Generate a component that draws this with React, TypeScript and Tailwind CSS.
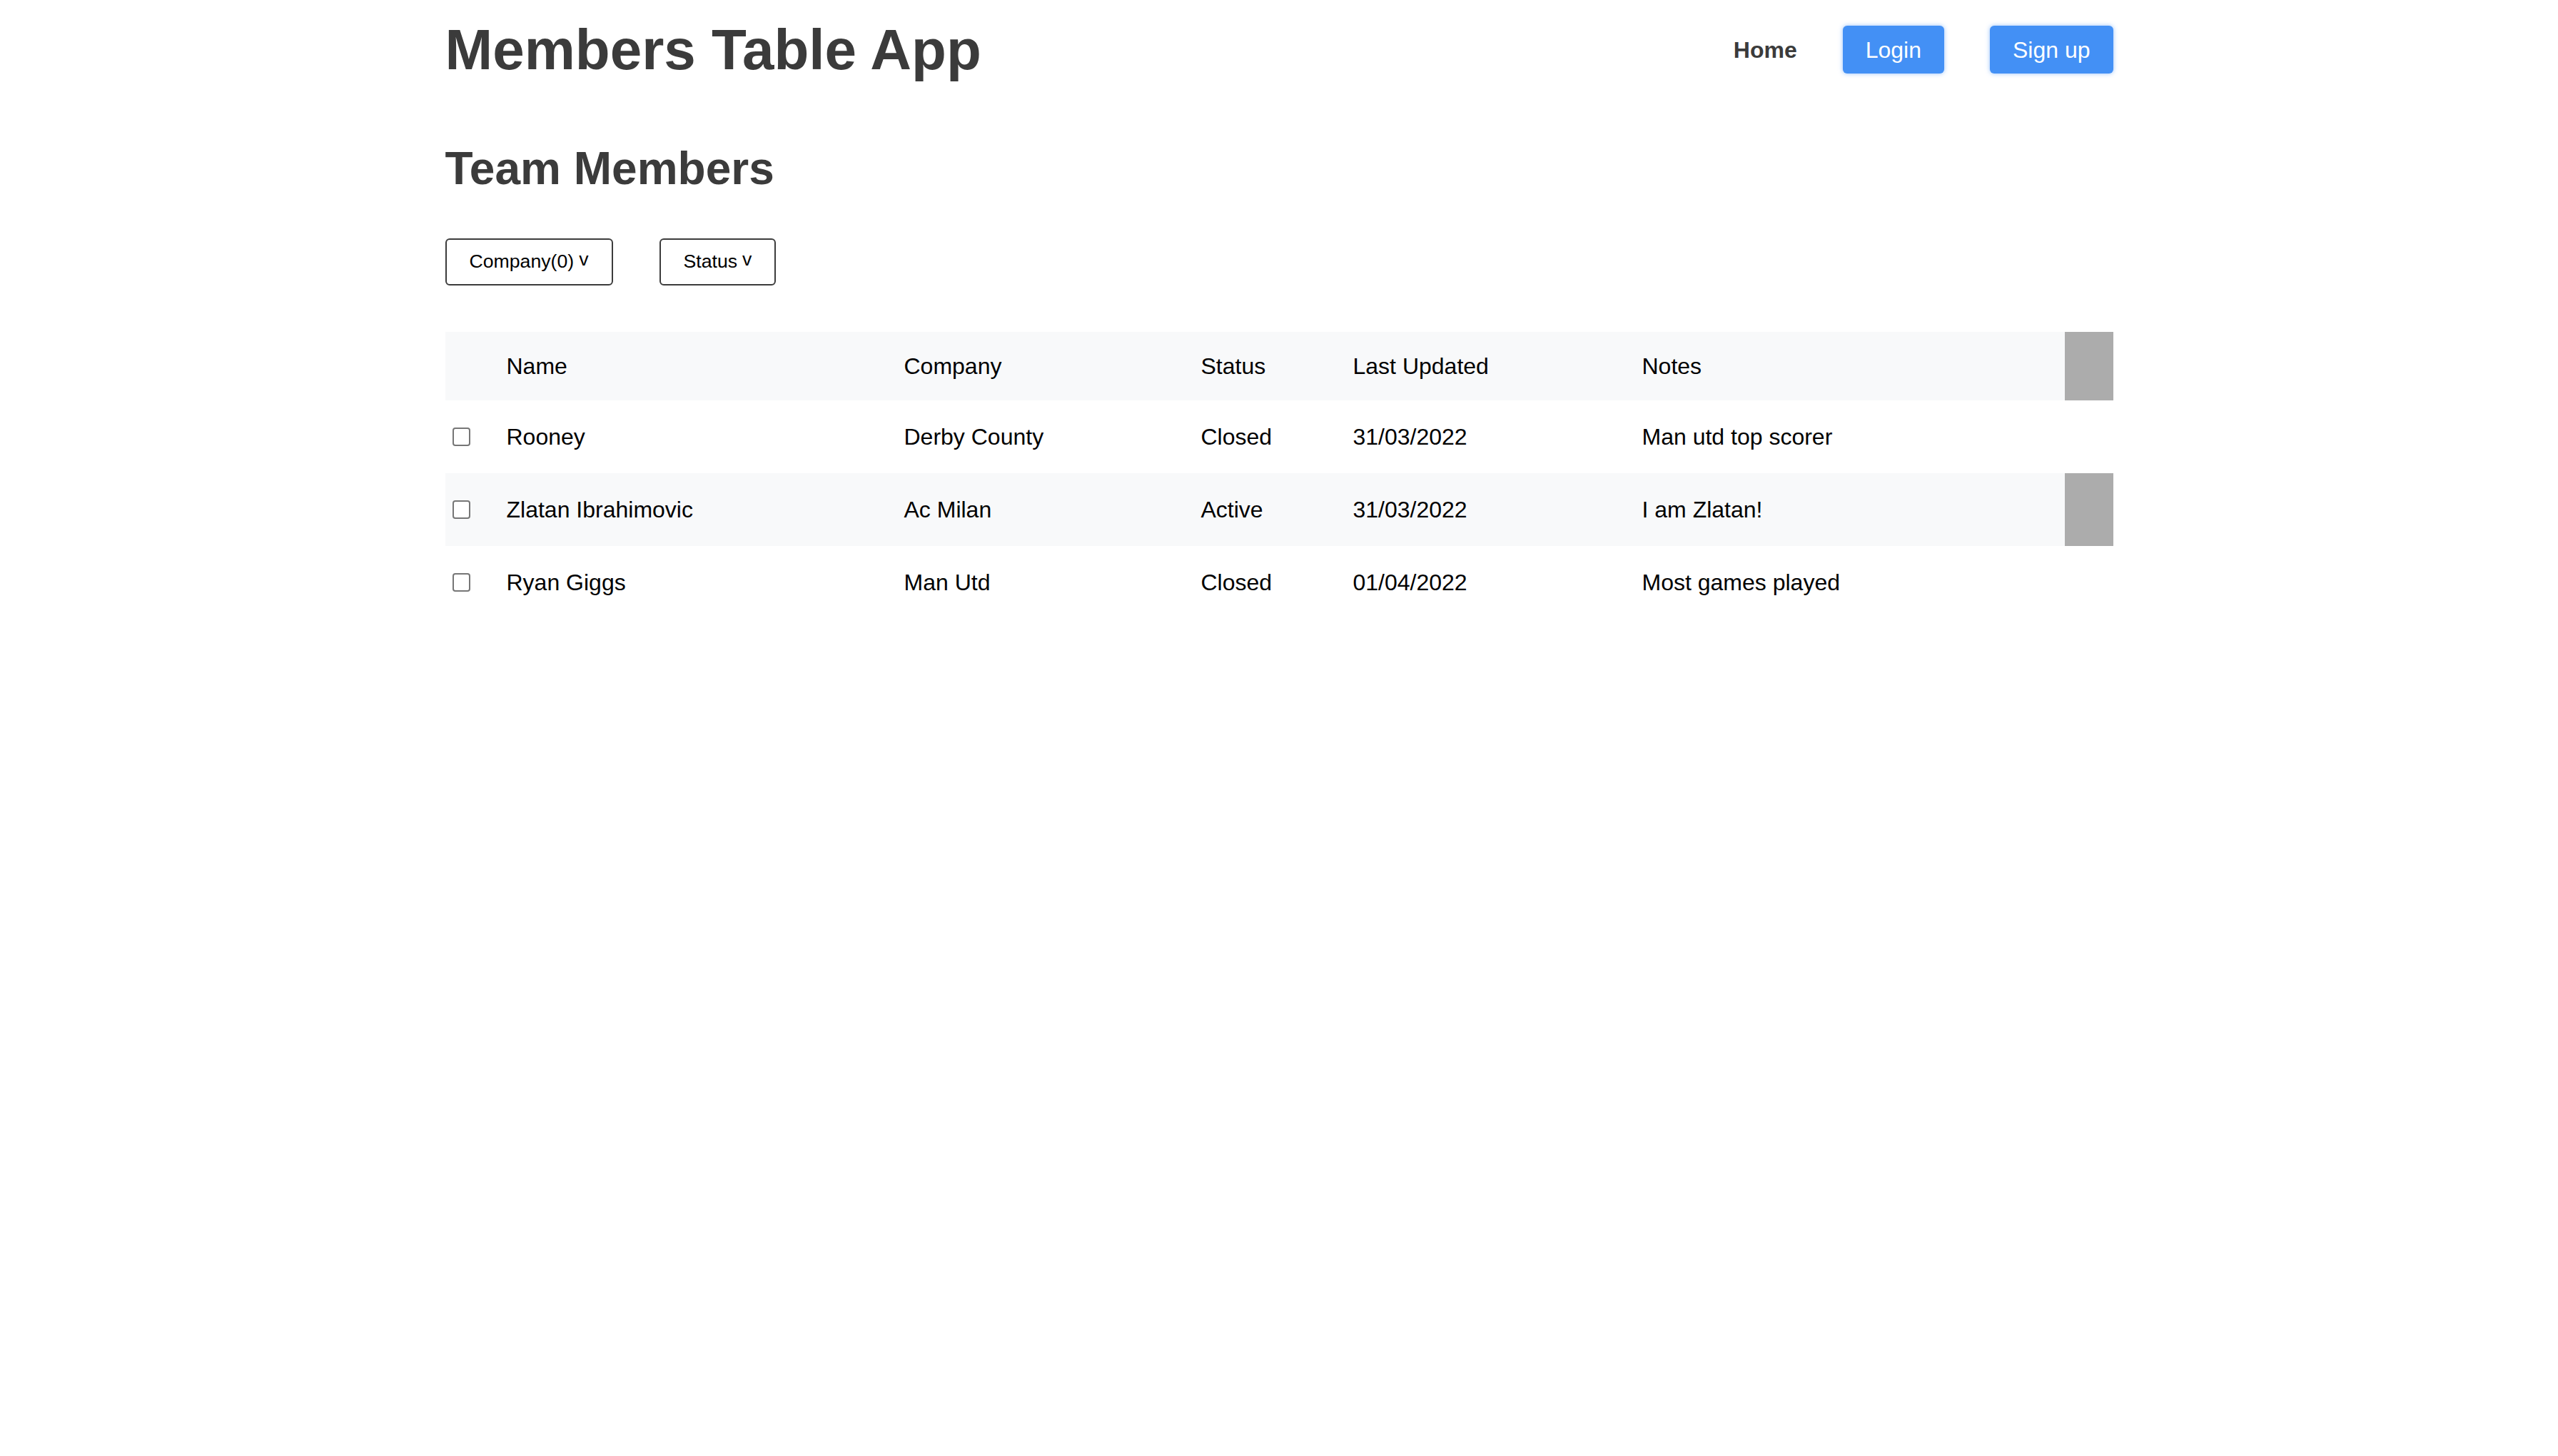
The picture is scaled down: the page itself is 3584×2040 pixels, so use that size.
import React from 'react';

interface Member {
  name: string;
  company: string;
  status: string;
  lastUpdated: string;
  notes: string;
}

const members: Member[] = [
  { name: 'Rooney', company: 'Derby County', status: 'Closed', lastUpdated: '31/03/2022', notes: 'Man utd top scorer' },
  { name: 'Zlatan Ibrahimovic', company: 'Ac Milan', status: 'Active', lastUpdated: '31/03/2022', notes: 'I am Zlatan!' },
  { name: 'Ryan Giggs', company: 'Man Utd', status: 'Closed', lastUpdated: '01/04/2022', notes: 'Most games played' },
];

// column widths: checkbox, name, company, status, last updated, notes, action
const rowGrid = 'grid grid-cols-[86px_557px_416px_213px_405px_592px_68px] items-stretch';

function FilterButton({ label }: { label: string }) {
  return (
    <button className="flex h-[66px] items-center rounded-[6px] border-2 border-[#3c3c3c] bg-white px-[32px] text-[26.67px] leading-[1.15] text-black">
      <span>{label}</span>
      <span className="mb-[6px] ml-[7px]">v</span>
    </button>
  );
}

export default function App() {
  return (
    <div className="min-h-screen bg-white font-['Liberation_Sans',Arial,Helvetica,sans-serif]">
      <div className="mx-auto w-[2337px]">
        {/* Top bar */}
        <header className="flex h-[139px] items-center justify-between">
          <h1 className="text-[80px] font-bold leading-[1.15] text-[#3b3b3b]">Members Table App</h1>
          <nav className="flex items-center gap-[64px]">
            <a className="text-[32px] font-bold text-[#3b3b3b]">Home</a>
            <button className="h-[67px] rounded-[6px] bg-[#4390f5] px-[32px] text-[32px] text-white shadow-[0_0_6px_rgba(67,144,245,0.55)]">
              Login
            </button>
            <button className="h-[67px] rounded-[6px] bg-[#4390f5] px-[32px] text-[32px] text-white shadow-[0_0_6px_rgba(67,144,245,0.55)]">
              Sign up
            </button>
          </nav>
        </header>

        <h2 className="mt-[61px] text-[64px] font-bold leading-[1.15] text-[#3b3b3b]">Team Members</h2>

        {/* Filters */}
        <div className="mt-[60px] flex gap-[65px]">
          <FilterButton label="Company(0)" />
          <FilterButton label="Status" />
        </div>

        {/* Table */}
        <div className="mt-[65px] text-[32px] text-black">
          <div className={`${rowGrid} h-[96px] bg-[#f8f9fa]`}>
            <div />
            <div className="flex items-center">Name</div>
            <div className="flex items-center">Company</div>
            <div className="flex items-center">Status</div>
            <div className="flex items-center">Last Updated</div>
            <div className="flex items-center">Notes</div>
            <div className="bg-[#acacac]" />
          </div>
          {members.map((m, i) => {
            const shaded = i % 2 === 1;
            return (
              <div key={m.name} className={`${rowGrid} h-[102px] ${shaded ? 'bg-[#f8f9fa]' : 'bg-white'}`}>
                <div className="flex items-center pl-[10px]">
                  <input
                    type="checkbox"
                    className="m-0 h-[26px] w-[25px] appearance-none rounded-[4px] border-2 border-[#767676] bg-white"
                  />
                </div>
                <div className="flex items-center">{m.name}</div>
                <div className="flex items-center">{m.company}</div>
                <div className="flex items-center">{m.status}</div>
                <div className="flex items-center">{m.lastUpdated}</div>
                <div className="flex items-center">{m.notes}</div>
                <div className={shaded ? 'bg-[#acacac]' : ''} />
              </div>
            );
          })}
        </div>
      </div>
    </div>
  );
}
